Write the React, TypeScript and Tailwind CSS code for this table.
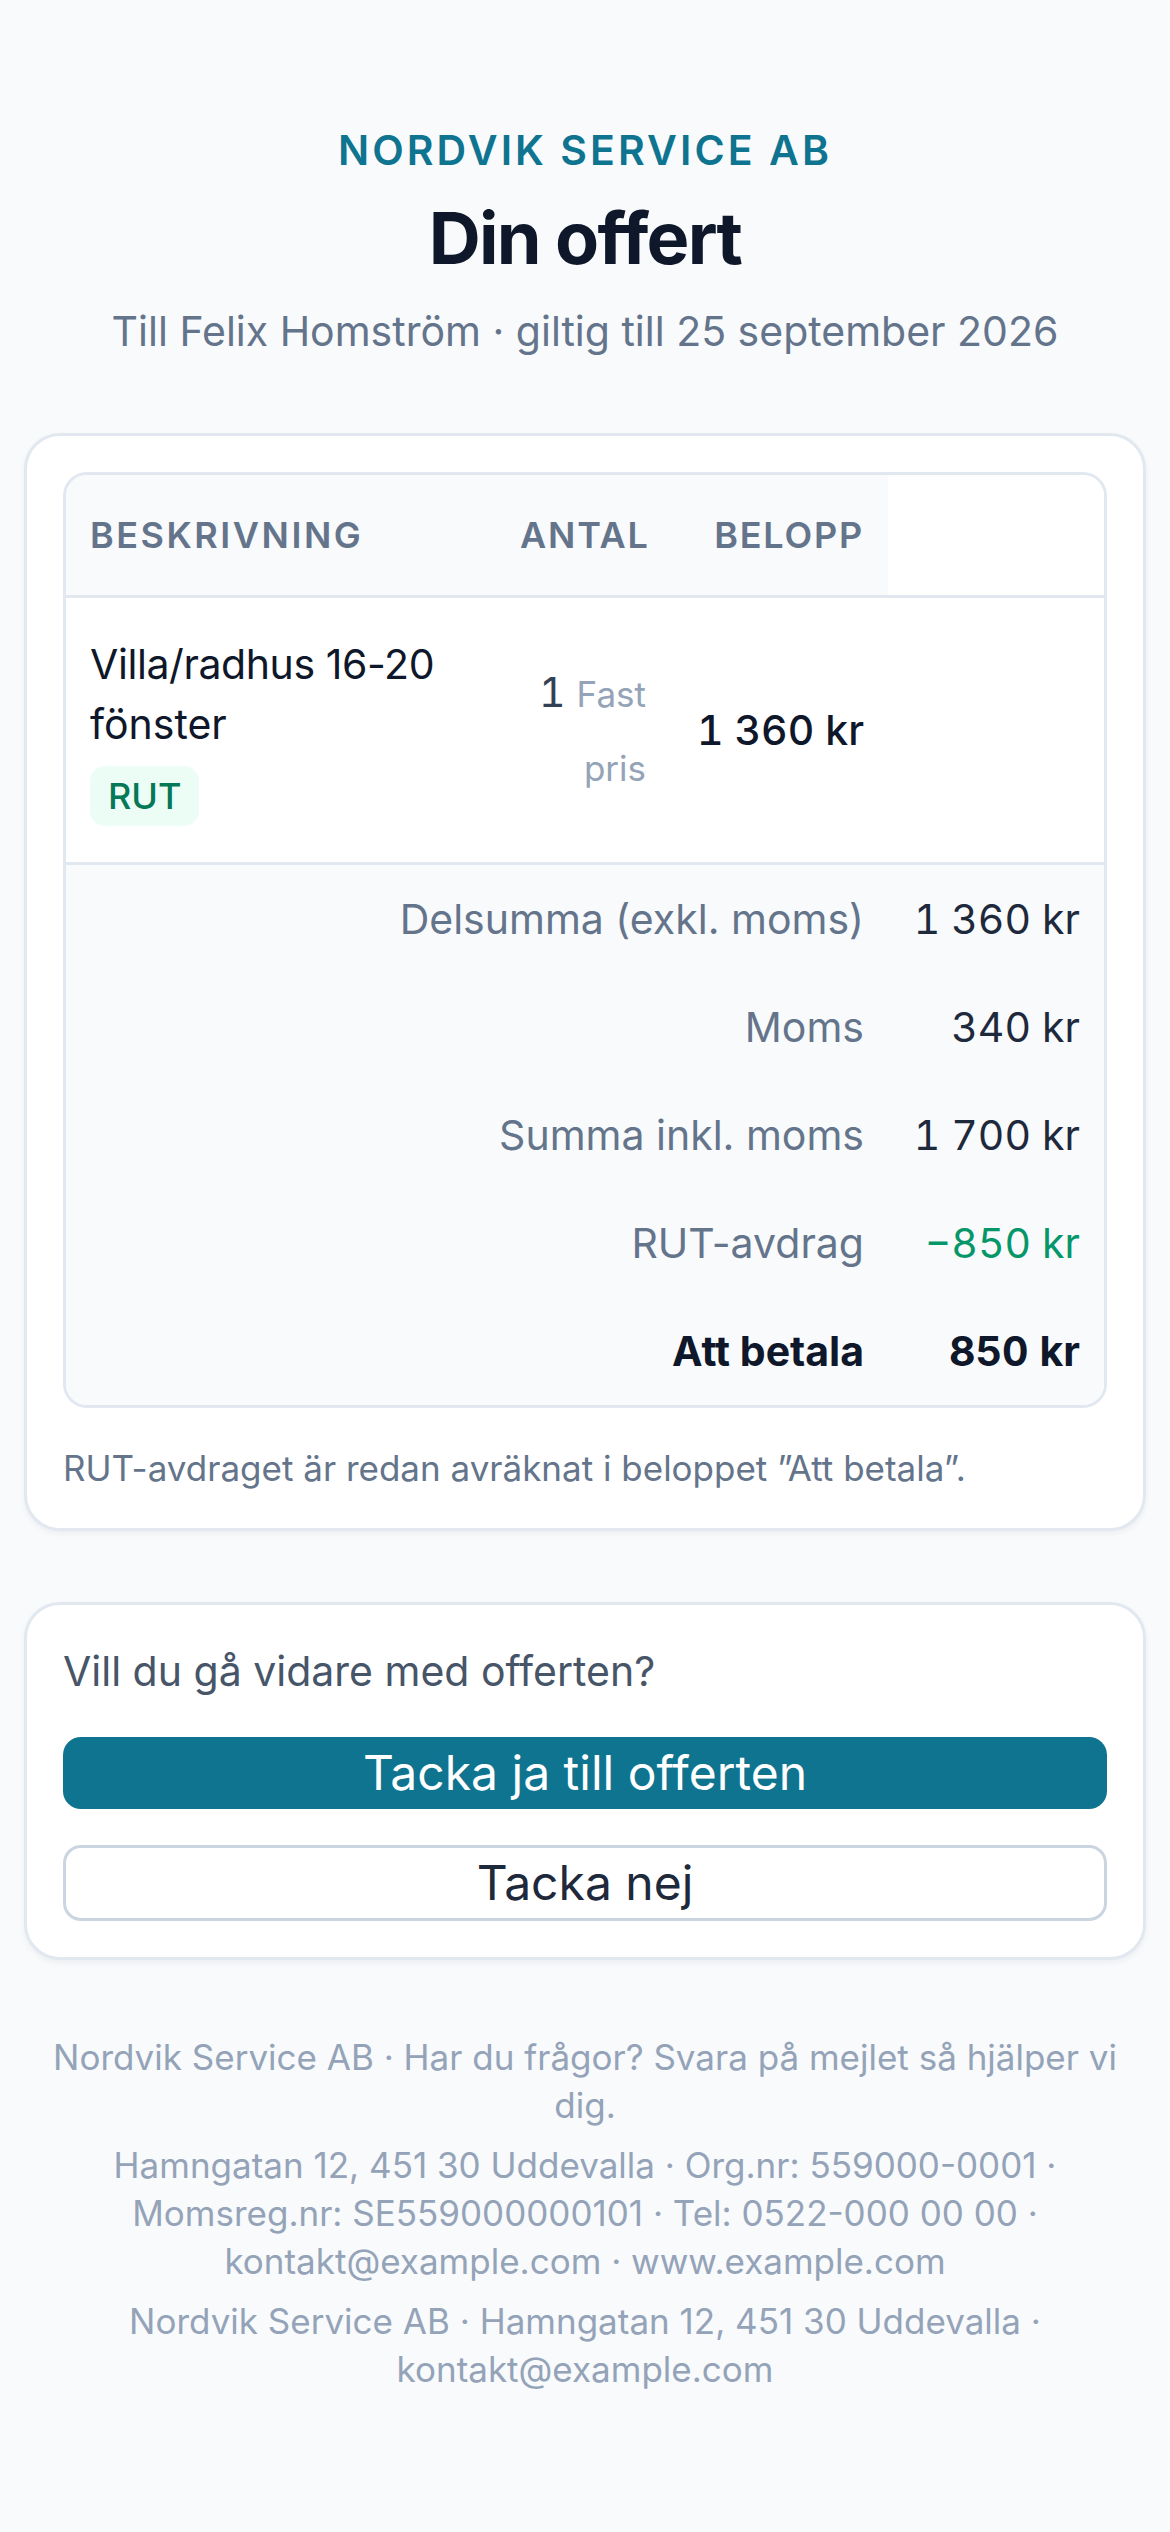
import React from 'react';

type Total = { label: string; value: string; tone?: 'green' | 'strong' };

const totals: Total[] = [
    { label: 'Delsumma (exkl. moms)', value: '1 360 kr' },
    { label: 'Moms', value: '340 kr' },
    { label: 'Summa inkl. moms', value: '1 700 kr' },
    { label: 'RUT-avdrag', value: '\u2212850 kr', tone: 'green' },
    { label: 'Att betala', value: '850 kr', tone: 'strong' },
];

const cols = 'grid grid-cols-[430px_174px_218px_1fr]';

const QuoteTable: React.FC = () => (
    <div className="overflow-hidden rounded-[24px] border-[3px] border-[#e2e8f0]">
        <div className={`${cols} border-b-[3px] border-[#e2e8f0] text-[36px] leading-[48px] font-semibold uppercase tracking-wider text-[#64748b]`}>
            <div className="bg-[#f8fafc] px-[24px] py-[36px] tracking-[0.07em]">Beskrivning</div>
            <div className="bg-[#f8fafc] px-[24px] py-[36px] text-right">Antal</div>
            <div className="bg-[#f8fafc] px-[24px] py-[36px] text-right">Belopp</div>
            <div className="bg-white" />
        </div>

        <div className={`${cols} border-b-[3px] border-[#e2e8f0] bg-white`}>
            <div className="px-[24px] py-[36px]">
                <div className="text-[41px] leading-[60px] text-[#0f172a]">
                    <span className="tracking-[-0.01em]">Villa/radhus 16-20</span> fönster
                </div>
                <span className="mt-[12px] inline-block rounded-[15px] bg-[#ecfdf5] px-[18px] text-[36px] leading-[60px] font-medium text-[#047857]">RUT</span>
            </div>
            <div className="flex items-center justify-end px-[24px] py-[36px]">
                <div className="text-right text-[41px] leading-[72px] tabular-nums">
                    <span className="text-[#334155]">1</span>{' '}
                    <span className="text-[35px] text-[#94a3b8]">Fast pris</span>
                </div>
            </div>
            <div className="flex items-center justify-end px-[24px] py-[36px] text-[41px] leading-[60px] font-medium tabular-nums text-[#0f172a]">
                1 360 kr
            </div>
            <div />
        </div>

        <div className="bg-[#f8fafc]">
            {totals.map(t => (
                <div key={t.label} className={`${cols} text-[41px] leading-[60px]`}>
                    <div className={`col-span-3 px-[24px] py-[24px] text-right ${t.tone === 'strong' ? 'font-bold text-[#0f172a]' : 'text-[#64748b]'}`}>
                        {t.label}
                    </div>
                    <div
                        className={`px-[24px] py-[24px] text-right tabular-nums ${
                            t.tone === 'strong' ? 'font-bold text-[#0f172a]' : t.tone === 'green' ? 'text-[#059669]' : 'text-[#1e293b]'
                        }`}
                    >
                        {t.value}
                    </div>
                </div>
            ))}
        </div>
    </div>
);

export default function App() {
    return (
        <div className="min-h-screen bg-[#f8fafc] px-[24px] pt-[120px] pb-[120px] font-['Inter',sans-serif]">
            <header className="text-center">
                <p className="text-[41px] leading-[60px] font-semibold uppercase tracking-[0.075em] text-[#0e7490]">Nordvik Service AB</p>
                <h1 className="mt-[10px] text-[72px] leading-[96px] font-bold tracking-tight text-[#0f172a]">Din offert</h1>
                <p className="mt-[15px] text-[41px] leading-[60px] text-[#64748b]">Till Felix Homström · giltig till 25 september 2026</p>
            </header>

            <section className="mt-[72px] rounded-[36px] border-[3px] border-[#e2e8f0] bg-white p-[36px] shadow-[0_3px_6px_rgba(15,23,42,0.05)]">
                <QuoteTable />
                <p className="mt-[36px] text-[35px] leading-[48px] text-[#64748b]">RUT-avdraget är redan avräknat i beloppet ”Att betala”.</p>
            </section>

            <section className="mt-[71px] rounded-[36px] border-[3px] border-[#e2e8f0] bg-white p-[36px] shadow-[0_3px_6px_rgba(15,23,42,0.05)]">
                <p className="text-[41px] leading-[60px] text-[#475569]">Vill du gå vidare med offerten?</p>
                <button className="mt-[36px] block h-[72px] w-full rounded-[18px] bg-[#0e7490] text-[48px] leading-[72px] text-white">
                    Tacka ja till offerten
                </button>
                <button className="mt-[36px] block h-[76px] w-full rounded-[18px] border-[3px] border-[#cbd5e1] bg-white text-[48px] leading-[70px] text-[#1e293b]">
                    Tacka nej
                </button>
            </section>

            <footer className="mt-[73px] px-[24px] text-center text-[35px] leading-[48px] text-[#94a3b8]">
                <p>Nordvik Service AB · Har du frågor? Svara på mejlet så hjälper vi dig.</p>
                <p className="mt-[12px]">
                    Hamngatan 12, 451 30 Uddevalla · Org.nr: 559000-0001 · Momsreg.nr: SE559000000101 · Tel: 0522-000 00 00 · kontakt@example.com · www.example.com
                </p>
                <p className="mt-[12px]">Nordvik Service AB · Hamngatan 12, 451 30 Uddevalla · kontakt@example.com</p>
            </footer>
        </div>
    );
}
